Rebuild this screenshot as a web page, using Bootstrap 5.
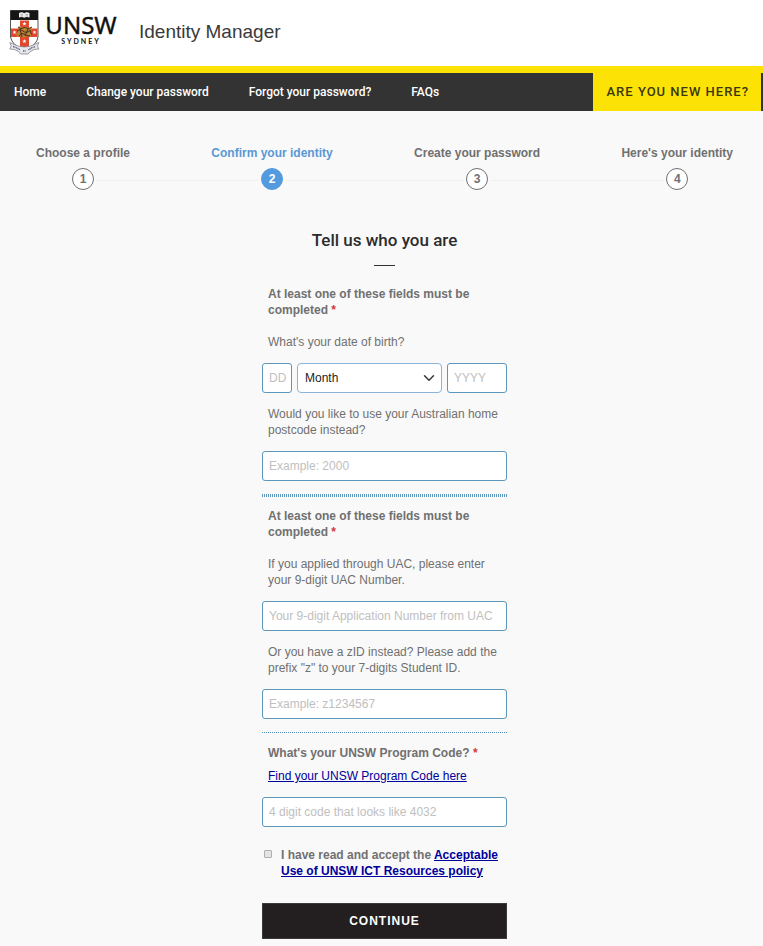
<!DOCTYPE html>
<html lang="en">
<head>
<meta charset="utf-8">
<meta name="viewport" content="width=device-width, initial-scale=1">
<title>Identity Manager</title>
<link rel="stylesheet" href="https://cdn.jsdelivr.net/npm/bootstrap@5.3.0/dist/css/bootstrap.min.css">
<style>
body { font: 12px/16px "Liberation Sans", Arial, sans-serif; color: #707070; background: #f9f9f9; }
.site-header { height: 73px; border-bottom: 7px solid #fde305; padding: 0 9px 2px; }
.crest { width: 31px; height: 46px; margin-right: 5px; }
.wordmark { width: 72px; margin-right: 22px; padding-bottom: 6px; color: #111; text-align: center; }
.wordmark-name { font: 24px/24px "Noto Sans", sans-serif; -webkit-text-stroke: 0.4px #111; }
.wordmark-city { font: 700 7px/8px Lato, sans-serif; letter-spacing: 2px; }
.site-title { font: 19px/24px "Liberation Sans", Arial, sans-serif; color: #3a3a3a; }
.site-nav { background: #333; padding: 0 2px 0 14px; height: 38px; font: 500 12px/16px Roboto, sans-serif; }
.site-nav .nav { gap: 40px; }
.site-nav .nav-link { padding: 0; color: #fff; }
.new-here { background: #fde305; color: #3b3810; padding: 0 12px 0 14px; font-size: 13px; letter-spacing: 1px; }
main { padding-left: 6px; }
.steps { margin: 34px 30px 0; font-weight: 700; }
.steps::before { content: ""; position: absolute; top: 35px; left: 47px; right: 56px; height: 1px; background: #efefef; }
.step-no { width: 22px; height: 22px; border: 1px solid #707070; background: #fff; margin-top: 7px; box-shadow: 0 0 0 3px #f9f9f9; }
.active-step { color: #5a98d4; }
.active-step .step-no { background: #539ade; border-color: #539ade; color: #fff; }
.identity-form { max-width: 245px; }
.form-title { font: 500 17px/24px Roboto, sans-serif; color: #2c2c2c; margin: 38px 0 13px; }
.title-rule { width: 21px; height: 1px; background: #333; margin-bottom: 20px; }
.group-title, .field-label { padding-left: 6px; display: block; }
.group-title { font-weight: 700; margin: 0 0 16px; }
.field-label { margin: 0 0 13px; }
.program-title { font-weight: 700; margin-bottom: 7px; }
.required-mark { color: #d03a3a; }
.identity-form .form-control, .identity-form .form-select { height: 30px; padding: 0 6px; margin-bottom: 13px; font-size: 12px; line-height: 16px; border: 1px solid #5d97be; border-radius: 3px; color: #222; background-color: #fff; }
.identity-form .form-control::placeholder { color: #c0c0c0; }
.identity-form .form-select { padding: 0 24px 0 7px; border-color: #8ab4da; border-radius: 4px; background-position: right 6px center; background-size: 12px 12px; }
.date-row { gap: 5px; }
.identity-form .day-field { width: 30px; padding-right: 2px; }
.date-row .year-field { width: 60px; }
.rule-thick { height: 3px; margin-bottom: 11px; background: repeating-linear-gradient(90deg, #5d97be 0 1px, transparent 1px 2px); }
.rule-thin { border-top: 1px dotted #4f8fbb; margin-bottom: 12px; }
.identity-form a { color: #00009c; text-decoration: underline; }
.accept { margin-top: 20px; gap: 9px; font-weight: 700; padding-left: 2px; }
.accept-box { width: 8px; height: 8px; margin: 3px 0 0; border: 1px solid #b0b0b0; border-radius: 1px; background: #e4e4e4; appearance: none; }
.accept-box:checked { background: #539ade; }
.btn-continue { height: 36px; margin: 24px 0 8px; border: 1px solid #3c393a; border-radius: 0; background: #231f20; color: #fff; font: 700 12px/16px "Liberation Sans", Arial, sans-serif; letter-spacing: 1px; }
.btn-continue:hover { background: #3c393a; color: #fff; }
</style>
<script src="https://cdn.jsdelivr.net/npm/bootstrap@5.3.0/dist/js/bootstrap.bundle.min.js"></script>
</head>
<body>
<header class="site-header d-flex align-items-center bg-white">
  <svg class="crest flex-shrink-0" viewBox="0 0 31 46" aria-hidden="true">
    <path d="M1.5 1.5H29V28Q28 36 15.3 42Q3 36 1.5 28Z" fill="#fff" stroke="#555" stroke-width="1"/>
    <path d="M1.5 1.5H29V11H1.5Z" fill="#151515"/>
    <path d="M10 4Q13 2.500 15.200 4.200Q17.500 2.500 20.500 4V8.500Q17.500 7.300 15.200 8.800Q13 7.300 10 8.500Z" fill="#eee"/>
    <path d="M11.500 5.500h2.500M11.500 7h2.500M16.500 5.500H19M16.500 7H19" stroke="#777" stroke-width=".5"/>
    <path d="M11 11.500H20V19.500H28.500V28H20V39H11V28H2V19.500H11Z" fill="#e2472f"/>
    <path d="M9 19l2-2 2 2 3-2 3 2 3-1 1 3-2 2 2 3-3 2-2-1-3 2-4-2-3 1-1-3 2-2z" fill="#b98335"/>
    <path d="M9 18q3 3 5 1t5 1l4-2M8 22q3-3 6 0t8-1M10 27q2-4 5-2t6 2M11 20l2 8M19 20l-3 7M21 22l2 4" stroke="#49301c" stroke-width="1" fill="none"/>
    <path d="M15.400 12.500l.5 1.400 1.600.2-1.200 1 .4 1.500-1.300-.8-1.300.8.400-1.500-1.200-1 1.600-.2zM15.400 30l.5 1.400 1.600.2-1.200 1 .4 1.500-1.300-.8-1.300.8.400-1.500-1.200-1 1.600-.2zM5.500 21.500l.5 1.100 1.200.2-.9.800.3 1.300-1.100-.7-1.100.7.300-1.300-.9-.8 1.200-.2zM25.500 21.500l.5 1.100 1.200.2-.9.800.3 1.300-1.100-.7-1.100.7.300-1.300-.9-.8 1.200-.2z" fill="#fff"/>
    <path d="M.8 33.500L4 35Q15.300 41 26.600 35L29.800 33.500L28.500 37L29.800 40L25 40.500Q20 43 19 45H11.600Q10 42 5.500 40.500L.8 40L2.200 37Z" fill="#e6e8ee" stroke="#777" stroke-width=".7"/>
    <path d="M4 37.500Q8 38.500 11 41M14 42h3M19.500 41Q22.500 38.500 26.500 37.500" stroke="#555f78" stroke-width="1.500" stroke-dasharray="1 .6" fill="none"/>
  </svg>
  <div class="wordmark flex-shrink-0">
    <div class="wordmark-name">UNSW</div>
    <div class="wordmark-city">SYDNEY</div>
  </div>
  <h1 class="site-title m-0">Identity Manager</h1>
</header>
<nav class="site-nav d-flex justify-content-between" aria-label="Main">
  <div class="nav align-items-center flex-nowrap">
    <a class="nav-link" href="#">Home</a>
    <a class="nav-link" href="#">Change your password</a>
    <a class="nav-link" href="#">Forgot your password?</a>
    <a class="nav-link" href="#">FAQs</a>
  </div>
  <a class="new-here d-flex align-items-center text-decoration-none" href="#">ARE YOU NEW HERE?</a>
</nav>
<main>
  <ol class="steps list-unstyled d-flex justify-content-between position-relative">
    <li class="d-flex flex-column align-items-center position-relative">Choose a profile<span class="step-no rounded-circle d-flex align-items-center justify-content-center">1</span></li>
    <li class="active-step d-flex flex-column align-items-center position-relative" aria-current="step">Confirm your identity<span class="step-no rounded-circle d-flex align-items-center justify-content-center">2</span></li>
    <li class="d-flex flex-column align-items-center position-relative">Create your password<span class="step-no rounded-circle d-flex align-items-center justify-content-center">3</span></li>
    <li class="d-flex flex-column align-items-center position-relative">Here's your identity<span class="step-no rounded-circle d-flex align-items-center justify-content-center">4</span></li>
  </ol>
  <form class="identity-form mx-auto">
    <h2 class="form-title text-center">Tell us who you are</h2>
    <div class="title-rule mx-auto"></div>

    <p class="group-title">At least one of these fields must be completed <span class="required-mark">*</span></p>
    <label class="field-label" for="day">What's your date of birth?</label>
    <div class="date-row d-flex">
      <input class="form-control day-field flex-shrink-0" id="day" type="text" placeholder="DD">
      <select class="form-select" id="month" aria-label="Month"><option>Month</option><option>January</option><option>February</option><option>March</option><option>April</option><option>May</option><option>June</option><option>July</option><option>August</option><option>September</option><option>October</option><option>November</option><option>December</option></select>
      <input class="form-control year-field flex-shrink-0" id="year" type="text" placeholder="YYYY" aria-label="Year">
    </div>
    <label class="field-label" for="postcode">Would you like to use your Australian home postcode instead?</label>
    <input class="form-control" id="postcode" type="text" placeholder="Example: 2000">
    <div class="rule-thick"></div>

    <p class="group-title">At least one of these fields must be completed <span class="required-mark">*</span></p>
    <label class="field-label" for="uac">If you applied through UAC, please enter your 9-digit UAC Number.</label>
    <input class="form-control" id="uac" type="text" placeholder="Your 9-digit Application Number from UAC">
    <label class="field-label" for="zid">Or you have a zID instead? Please add the prefix "z" to your 7-digits Student ID.</label>
    <input class="form-control" id="zid" type="text" placeholder="Example: z1234567">
    <div class="rule-thin"></div>

    <label class="field-label program-title" for="program">What's your UNSW Program Code? <span class="required-mark">*</span></label>
    <div class="field-label"><a href="#">Find your UNSW Program Code here</a></div>
    <input class="form-control" id="program" type="text" placeholder="4 digit code that looks like 4032">

    <div class="accept d-flex align-items-start">
      <input class="accept-box flex-shrink-0" id="accept" type="checkbox">
      <label for="accept">I have read and accept the <a href="#">Acceptable Use of UNSW ICT Resources policy</a></label>
    </div>
    <button class="btn btn-continue w-100" type="submit">CONTINUE</button>
  </form>
</main>
</body>
</html>
